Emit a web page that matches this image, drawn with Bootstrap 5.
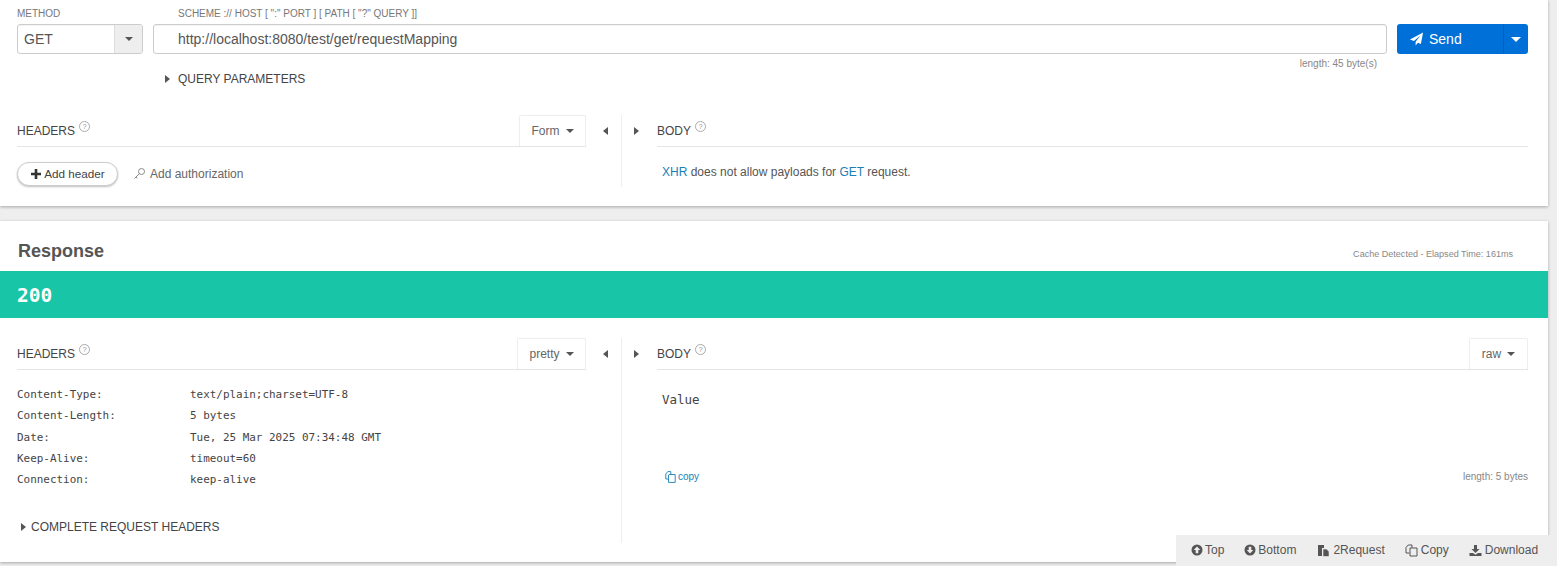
<!DOCTYPE html>
<html lang="en">
<head>
<meta charset="utf-8">
<title>REST Client</title>
<link rel="stylesheet" href="https://cdn.jsdelivr.net/npm/bootstrap@5.3.0/dist/css/bootstrap.min.css">
<style>
html,body{height:566px;overflow:hidden}
body{background:#eee;font-family:"Liberation Sans",Arial,sans-serif;color:#444;font-size:12px;line-height:1.2}
.rx-panel{background:#fff;width:1548px;box-shadow:0 1px 3px rgba(0,0,0,.3)}
.rx-req{height:206px;padding:0 20px 0 17px}
.rx-res{height:341px;margin-top:15px}
.rx-toprow{padding-top:8px}
.rx-lbl{font-size:10px;color:#777;height:16px;line-height:12px}
.rx-lbl-url{padding-left:25px}
.rx-method{width:126px;margin-right:10px}
.rx-url{flex:1;margin-right:10px}
.rx-field{height:30px;border:1px solid #ccc;border-radius:3px;font-size:14px;color:#555;display:flex;align-items:center;overflow:hidden;box-shadow:inset 0 1px 1px rgba(0,0,0,.05)}
.rx-field .rx-val{flex:1;padding-left:6px}
.rx-url .rx-field .rx-val{padding-left:24px}
.rx-mcaret{width:28px;height:100%;background:#eee;border-left:1px solid #ddd;display:flex;align-items:center;justify-content:center}
.rx-len{font-size:10px;color:#888;text-align:right;padding-right:10px;height:12px;line-height:12px;margin-top:4px}
.rx-send{width:131px;height:30px;background:#0070d9;border-radius:3px;color:#fff;font-size:14px;display:flex;margin-top:16px}
.rx-send-main{flex:1;display:flex;align-items:center;padding-left:12px;gap:5px}
.rx-send-drop{width:25px;border-left:1px solid #0a5cb0;display:flex;align-items:center;justify-content:center}
.rx-down{width:0;height:0;border-left:4px solid transparent;border-right:4px solid transparent;border-top:4px solid #555;display:inline-block}
.rx-down.w{border-top-color:#fff;border-left-width:5px;border-right-width:5px;border-top-width:5px}
.rx-right{width:0;height:0;border-top:4px solid transparent;border-bottom:4px solid transparent;border-left:5px solid #555;display:inline-block}
.rx-left{width:0;height:0;border-top:4px solid transparent;border-bottom:4px solid transparent;border-right:5px solid #555;display:inline-block}
.rx-qp{margin:2px 0 0 147px;height:14px;font-size:12px;padding-left:1px;gap:8px;color:#444;line-height:14px}
.rx-split{display:flex}
.rx-req .rx-split{margin-top:29px;height:72px}
.rx-res .rx-split{margin-top:20px;padding:0 20px 0 17px;height:205px}
.rx-lpane{width:569px;flex:none}
.rx-gut{width:71px;flex:none;position:relative;display:flex;justify-content:space-between;padding:12px 18px 0 17px;height:100%}
.rx-gut::before{content:"";position:absolute;left:35px;top:0;bottom:0;width:1px;background:#eee}
.rx-rpane{flex:1}
.rx-phead{height:32px;border-bottom:1px solid #e5e5e5;display:flex;justify-content:space-between;align-items:flex-end;font-size:12px}
.rx-ptitle{padding-bottom:8px;line-height:14px;display:flex;gap:4px;color:#444}
.rx-help{width:11px;height:11px;border:1px solid #aaa;border-radius:50%;font-size:7.5px;line-height:9px;text-align:center;color:#999;margin-top:-3px;margin-bottom:3px}
.rx-tab{height:31px;border:1px solid #eee;border-bottom:0;border-radius:2px 2px 0 0;display:flex;align-items:center;justify-content:center;gap:6px;font-size:12px;color:#666;box-shadow:0 0 1px rgba(0,0,0,.05)}
.rx-addrow{margin-top:15px;gap:15px}
.rx-addbtn{height:24px;width:101px;border-radius:12px;background:#fff;border:1px solid #ccc;box-shadow:0 1px 2px rgba(0,0,0,.25);font-size:11.7px;color:#444;padding:0 0 0 1px;display:flex;align-items:center;justify-content:center;gap:3px}
.rx-auth{font-size:12px;color:#666;gap:4px}
.rx-xhr{font-size:12px;margin:18px 0 0 5px;color:#555;line-height:14px}
.rx-xhr span{color:#1a7fb5}
.rx-rtitle{height:50px;padding:0 35px 0 18px;display:flex;justify-content:space-between;align-items:flex-start}
.rx-rtitle h2{font-size:18px;font-weight:700;color:#555;margin:20px 0 0;line-height:21px}
.rx-elapsed{font-size:9.05px;color:#888;margin-top:28px;line-height:11px}
.rx-status{height:47px;background:#18c5a6;color:#fff;font:700 19.5px/49px "DejaVu Sans Mono",monospace;padding-left:17px}
.rx-hdrs{font:10.95px/21.25px "DejaVu Sans Mono",monospace;color:#444;margin-top:14px;height:107px}
.rx-hrow{display:flex}
.rx-hkey{width:173px}
.rx-complete{margin:29px 0 0 4px;font-size:12px;gap:5px;line-height:14px}
.rx-value{font:12.5px/16px "DejaVu Sans Mono",monospace;color:#444;margin:22px 0 0 5px;height:78px}
.rx-foot{display:flex;justify-content:space-between;align-items:center;margin-left:8px;height:14px}
.rx-copy{font-size:10px;color:#1a7fb5;gap:2px}
.rx-flen{font-size:10px;color:#888}
.rx-tools{position:fixed;right:0;bottom:0;width:381px;height:31px;background:#eee;display:flex;align-items:center;gap:20px;padding-left:15px;font-size:12px;color:#555}
.rx-tool{display:flex;align-items:center;gap:2px}
.rx-tool-wide{gap:3px}
.rx-tool-first{margin-left:1px}
</style>
</head>
<body>
<section class="rx-panel rx-req">
  <div class="rx-toprow d-flex">
    <div class="rx-method">
      <div class="rx-lbl">METHOD</div>
      <div class="rx-field"><div class="rx-val">GET</div><div class="rx-mcaret"><i class="rx-down"></i></div></div>
    </div>
    <div class="rx-url">
      <div class="rx-lbl rx-lbl-url">SCHEME :// HOST [ ":" PORT ] [ PATH [ "?" QUERY ]]</div>
      <div class="rx-field"><div class="rx-val">http://localhost:8080/test/get/requestMapping</div></div>
      <div class="rx-len">length: 45 byte(s)</div>
    </div>
    <div class="rx-send">
      <div class="rx-send-main">
        <svg width="15" height="14" viewBox="0 0 16 16" fill="#fff"><path d="M15.500.5.500 8.700l4.600 1.700L12.500 4 7 11.200v4.300l2.700-3.100 3.300 1.300z"/></svg>
        <span>Send</span>
      </div>
      <div class="rx-send-drop"><i class="rx-down w"></i></div>
    </div>
  </div>
  <div class="rx-qp d-flex align-items-center"><i class="rx-right"></i><span>QUERY PARAMETERS</span></div>
  <div class="rx-split">
    <div class="rx-lpane">
      <div class="rx-phead">
        <div class="rx-ptitle"><span>HEADERS</span><span class="rx-help">?</span></div>
        <div class="rx-tab" style="width:67px">Form <i class="rx-down"></i></div>
      </div>
      <div class="rx-addrow d-flex align-items-center">
        <button type="button" class="rx-addbtn"><svg width="10" height="10" viewBox="0 0 10 10" fill="#333"><path d="M3.700 0h2.600v3.700H10v2.600H6.300V10H3.700V6.300H0V3.700h3.700z"/></svg>Add header</button>
        <div class="rx-auth d-flex align-items-center">
          <svg width="13" height="13" viewBox="0 0 13 13" fill="none" stroke="#888" stroke-width="1"><circle cx="8.500" cy="4.500" r="3"/><path d="M6.300 6.700 1.500 11.500M3 10l1.300 1.300"/></svg>
          <span>Add authorization</span>
        </div>
      </div>
    </div>
    <div class="rx-gut"><i class="rx-left"></i><i class="rx-right"></i></div>
    <div class="rx-rpane">
      <div class="rx-phead"><div class="rx-ptitle"><span>BODY</span><span class="rx-help">?</span></div></div>
      <div class="rx-xhr"><span>XHR</span> does not allow payloads for <span>GET</span> request.</div>
    </div>
  </div>
</section>

<section class="rx-panel rx-res">
  <div class="rx-rtitle"><h2>Response</h2><div class="rx-elapsed">Cache Detected - Elapsed Time: 161ms</div></div>
  <div class="rx-status">200</div>
  <div class="rx-split">
    <div class="rx-lpane">
      <div class="rx-phead">
        <div class="rx-ptitle"><span>HEADERS</span><span class="rx-help">?</span></div>
        <div class="rx-tab" style="width:69px">pretty <i class="rx-down"></i></div>
      </div>
      <div class="rx-hdrs">
        <div class="rx-hrow"><span class="rx-hkey">Content-Type:</span><span>text/plain;charset=UTF-8</span></div>
        <div class="rx-hrow"><span class="rx-hkey">Content-Length:</span><span>5 bytes</span></div>
        <div class="rx-hrow"><span class="rx-hkey">Date:</span><span>Tue, 25 Mar 2025 07:34:48 GMT</span></div>
        <div class="rx-hrow"><span class="rx-hkey">Keep-Alive:</span><span>timeout=60</span></div>
        <div class="rx-hrow"><span class="rx-hkey">Connection:</span><span>keep-alive</span></div>
      </div>
      <div class="rx-complete d-flex align-items-center"><i class="rx-right"></i><span>COMPLETE REQUEST HEADERS</span></div>
    </div>
    <div class="rx-gut"><i class="rx-left"></i><i class="rx-right"></i></div>
    <div class="rx-rpane">
      <div class="rx-phead">
        <div class="rx-ptitle"><span>BODY</span><span class="rx-help">?</span></div>
        <div class="rx-tab" style="width:59px">raw <i class="rx-down"></i></div>
      </div>
      <div class="rx-value">Value</div>
      <div class="rx-foot">
        <div class="rx-copy d-flex align-items-center">
          <svg width="11" height="12" viewBox="0 0 11 12" fill="none" stroke="#1a7fb5" stroke-width=".9"><path d="M3.500 8H.8V3L2.800.6h3V3M6 3.500H4L3.500 4v7.400h6.700V3.500z"/></svg>
          <span>copy</span>
        </div>
        <div class="rx-flen">length: 5 bytes</div>
      </div>
    </div>
  </div>
</section>

<div class="rx-tools">
  <div class="rx-tool"><svg width="12" height="12" viewBox="0 0 12 12"><circle cx="6" cy="6" r="5.500" fill="#555"/><path d="M6 2.500 9.300 6H7.300v3.200H4.700V6H2.700z" fill="#eee"/></svg>Top</div>
  <div class="rx-tool"><svg width="12" height="12" viewBox="0 0 12 12"><circle cx="6" cy="6" r="5.500" fill="#555"/><path d="M6 9.500 9.300 6H7.300V2.800H4.700V6H2.700z" fill="#eee"/></svg>Bottom</div>
  <div class="rx-tool rx-tool-wide rx-tool-first"><svg width="13" height="13" viewBox="0 0 13 13" fill="#555"><path d="M1 1h6v3H5v8H1z"/><path d="M6 5h3.500L12 7.500v5H6z" stroke="#eee" stroke-width=".6"/></svg>2Request</div>
  <div class="rx-tool rx-tool-wide"><svg width="13" height="13" viewBox="0 0 13 13" fill="none" stroke="#555"><path d="M4.500 9H1V3.500L3.200 1H7v3M7.500 4H5v8h7V4z"/></svg>Copy</div>
  <div class="rx-tool rx-tool-wide"><svg width="13" height="13" viewBox="0 0 13 13" fill="#555"><path d="M5 1h3v4h2.500L6.500 9l-4-4H5z"/><path d="M.5 9H4l2.500 1.800L9 9h3.500v3H.5z"/></svg>Download</div>
</div>
<script src="https://cdn.jsdelivr.net/npm/bootstrap@5.3.0/dist/js/bootstrap.bundle.min.js"></script>
</body>
</html>
